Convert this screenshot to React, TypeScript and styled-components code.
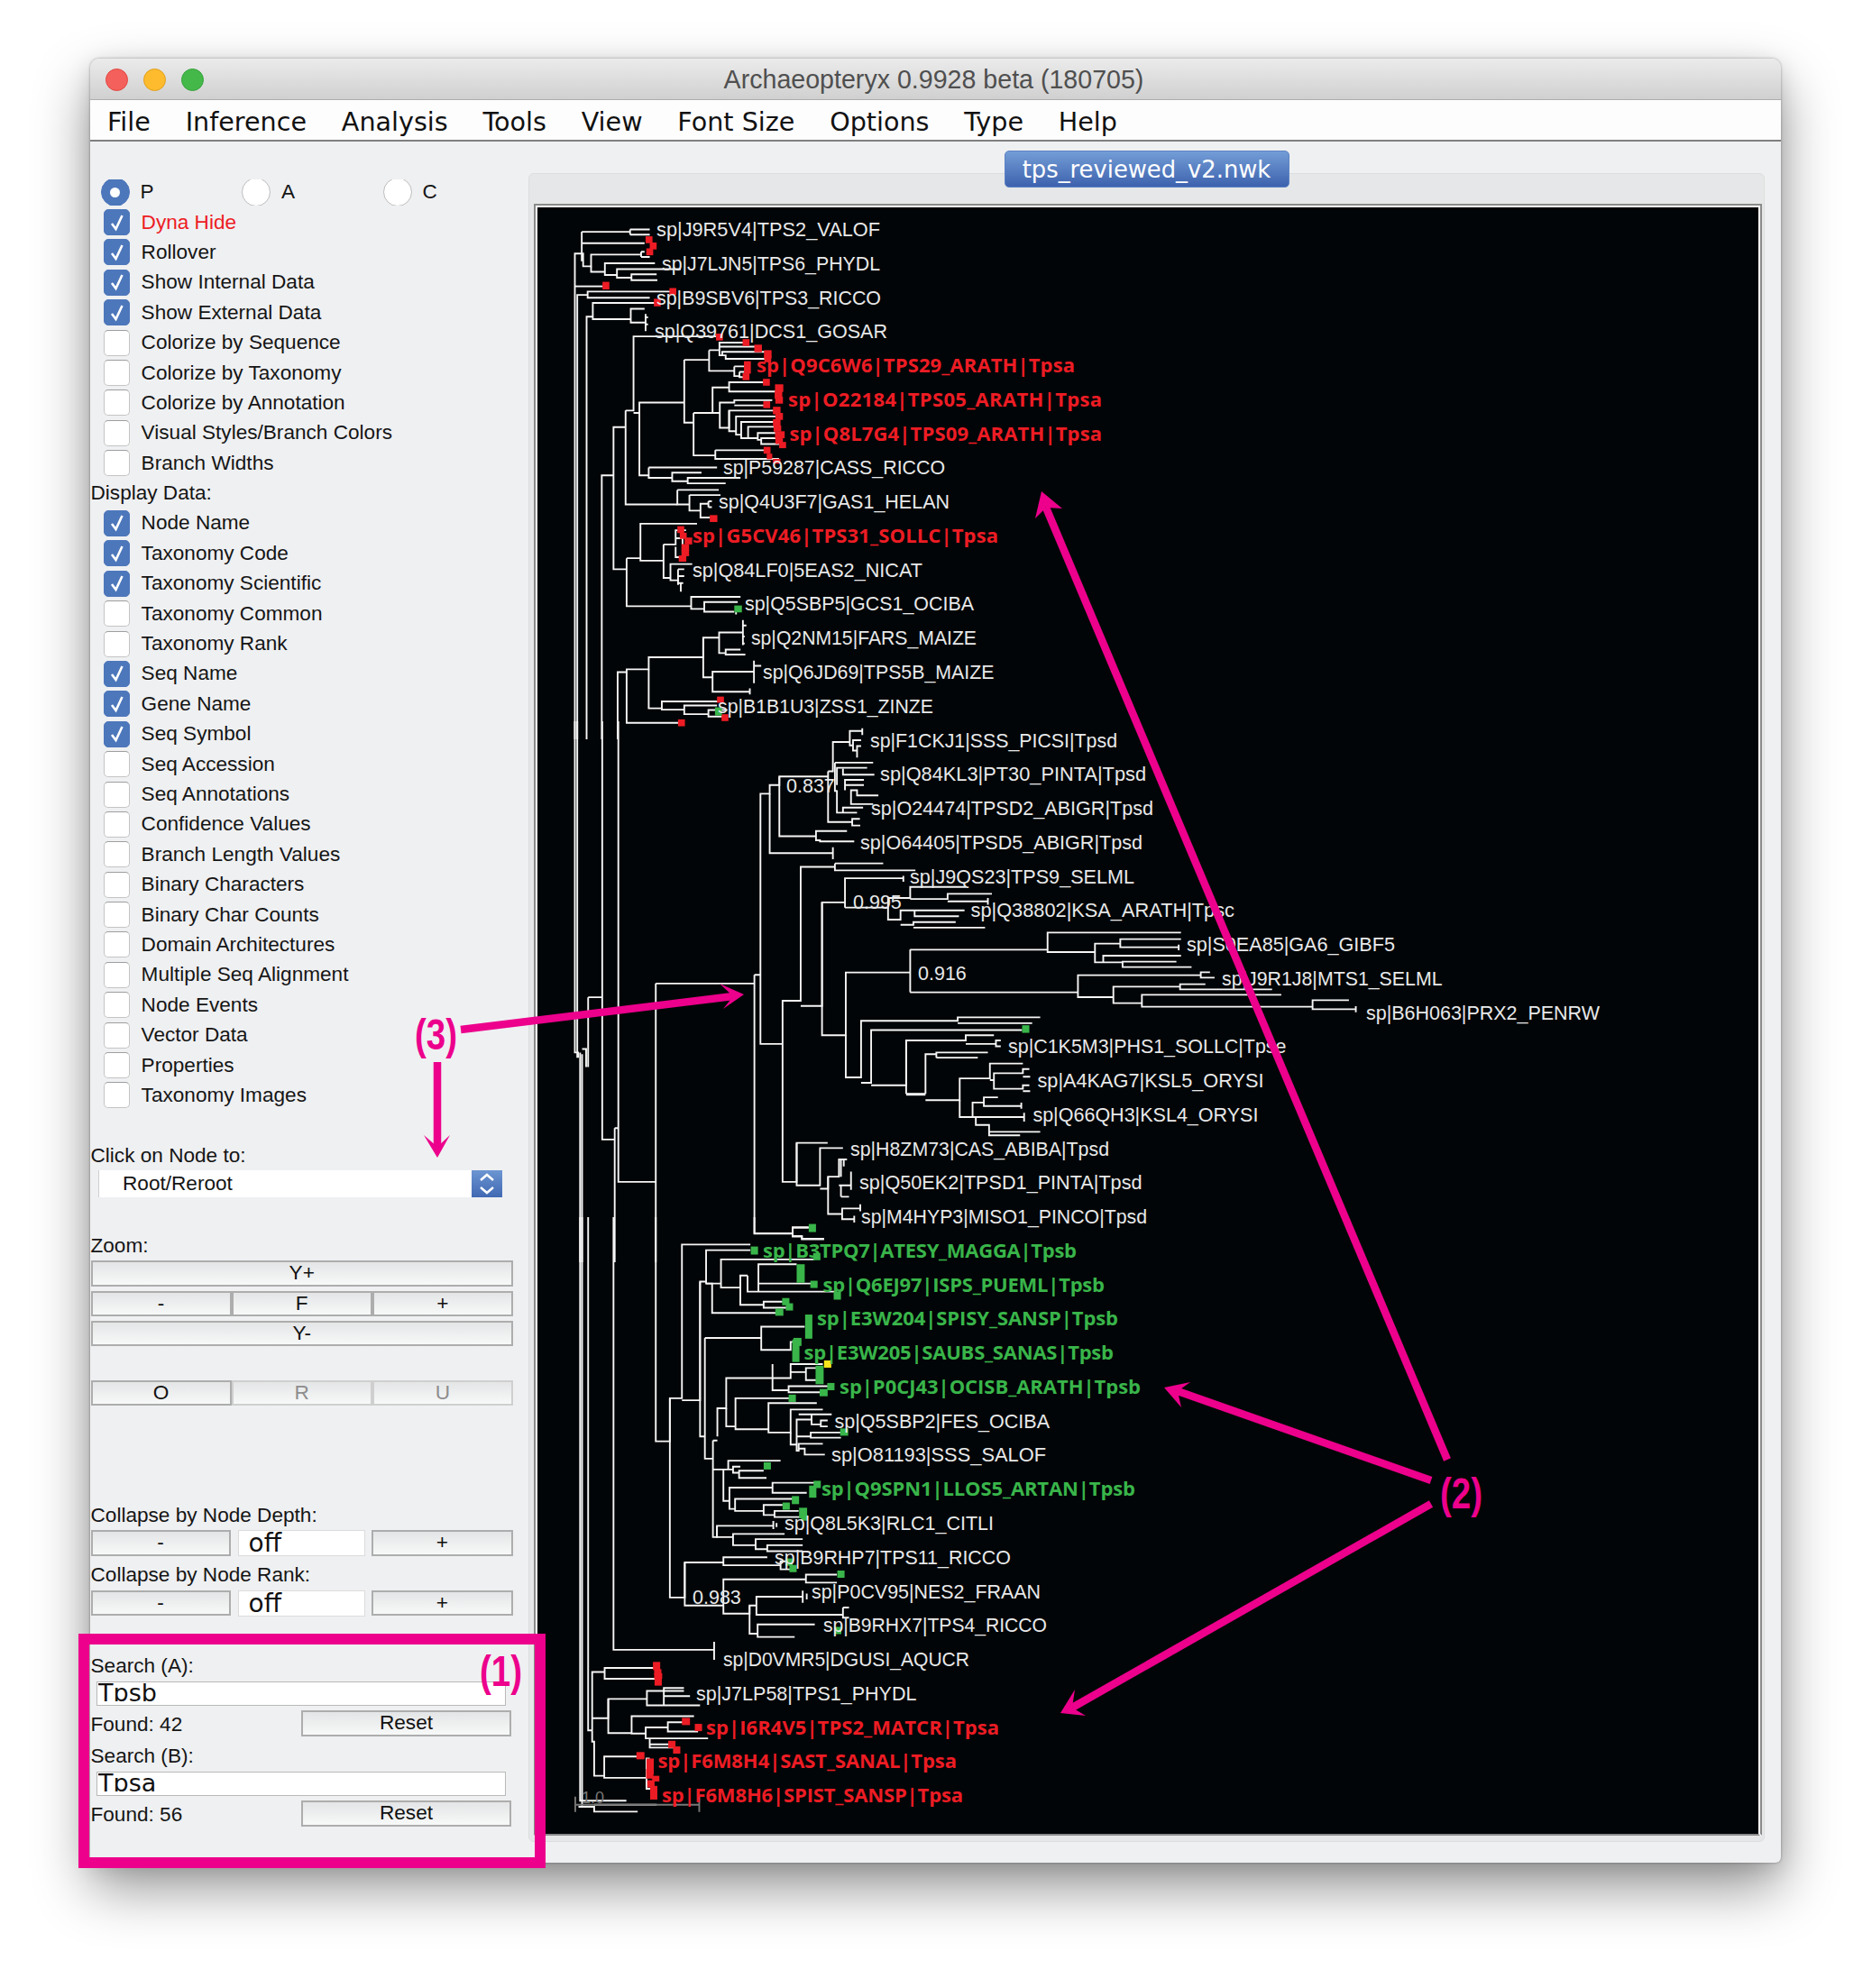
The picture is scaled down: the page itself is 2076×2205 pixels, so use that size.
import React from 'react';
import styled, { createGlobalStyle } from 'styled-components';

const Global = createGlobalStyle`
  html, body { margin: 0; padding: 0; background: #fff; }
  * { box-sizing: border-box; }
`;

const PINK = '#ec008c';
const SANS = '"Liberation Sans", Arial, sans-serif';
const WIDE = '"DejaVu Sans", Verdana, sans-serif';

const Page = styled.div`
  position: relative;
  width: 2076px;
  height: 2205px;
  padding: 65px 0 0 100px;
  overflow: hidden;
  background: #fff;
  font-family: ${SANS};
`;
const Win = styled.div`
  width: 1875px;
  height: 2001px;
  display: flex;
  flex-direction: column;
  background: #eff0f2;
  border-radius: 10px 10px 6px 6px;
  box-shadow: 0 28px 62px rgba(0, 0, 0, 0.42), 0 0 3px rgba(0, 0, 0, 0.35), 0 6px 24px rgba(0, 0, 0, 0.12);
`;
const TitleBar = styled.div`
  position: relative;
  height: 46px;
  flex: none;
  display: flex;
  align-items: center;
  justify-content: center;
  padding: 2px 4px 0 0;
  background: linear-gradient(#ebebeb, #d0d0d0);
  border-bottom: 1px solid #adadad;
  border-radius: 10px 10px 0 0;
  color: #4f4f4f;
  font-size: 28.6px;
`;
const Lights = styled.div`
  position: absolute;
  left: 17px;
  top: 11px;
  display: flex;
  gap: 17px;
`;
const Light = styled.div<{ $c: string; $b: string }>`
  width: 25px;
  height: 25px;
  border-radius: 50%;
  background: ${p => p.$c};
  border: 1px solid ${p => p.$b};
`;
const MenuBar = styled.div`
  height: 46px;
  flex: none;
  display: flex;
  align-items: center;
  gap: 38.8px;
  padding: 4px 0 0 19px;
  background: #fdfdfe;
  border-bottom: 2px solid #808080;
  font-family: ${WIDE};
  font-size: 28.6px;
  color: #111;
`;
const Content = styled.div`
  flex: 1;
  display: flex;
`;
const Side = styled.div`
  width: 486px;
  flex: none;
  padding: 39.5px 0 0 0.5px;
  font-size: 22.6px;
  color: #151515;
`;
const RadioRow = styled.div`
  display: flex;
  height: 33.4px;
  align-items: center;
`;
const RadioItem = styled.label`
  width: 156.5px;
  padding-left: 11px;
  display: flex;
  align-items: center;
  gap: 12px;
`;
const RadioClip = styled.span`
  width: 32px;
  height: 29px;
  overflow: hidden;
  display: flex;
  align-items: center;
  justify-content: center;
`;
const Disc = styled.span<{ $on?: boolean }>`
  width: 32px;
  height: 32px;
  flex: none;
  border-radius: 50%;
  display: flex;
  align-items: center;
  justify-content: center;
  background: ${p => (p.$on ? '#4d77bb' : '#fff')};
  border: 1px solid ${p => (p.$on ? '#4d77bb' : '#bdbdbd')};
  &::after {
    content: '';
    display: ${p => (p.$on ? 'block' : 'none')};
    width: 11px;
    height: 11px;
    border-radius: 50%;
    background: #fff;
  }
`;
const CheckRow = styled.div<{ $red?: boolean }>`
  display: flex;
  height: 33.4px;
  align-items: center;
  padding-left: 14.5px;
  gap: 12.6px;
  color: ${p => (p.$red ? '#ed1c24' : 'inherit')};
`;
const Box = styled.span<{ $on?: boolean }>`
  width: 29px;
  height: 29px;
  flex: none;
  border-radius: 5px;
  display: flex;
  align-items: center;
  justify-content: center;
  background: ${p => (p.$on ? '#4d77bb' : '#fff')};
  border: 1px solid ${p => (p.$on ? '#4d77bb' : '#c4c4c4')};
  border-top-color: ${p => (p.$on ? '#4d77bb' : '#9e9e9e')};
`;
const Label = styled.div<{ $mt?: number }>`
  height: 33.4px;
  line-height: 33.4px;
  margin-top: ${p => p.$mt ?? 0}px;
`;
const Combo = styled.div`
  width: 448px;
  height: 29.5px;
  margin-left: 8.5px;
  display: flex;
  background: #fff;
  border-left: 1px solid #d0d0d0;
`;
const ComboText = styled.div`
  flex: 1;
  padding-left: 26px;
  line-height: 29px;
`;
const ComboBtn = styled.div`
  width: 34px;
  display: flex;
  align-items: center;
  justify-content: center;
  background: linear-gradient(#6c95d2, #4069b3);
`;
const BtnRow = styled.div<{ $mt?: number; $w?: number }>`
  display: flex;
  width: ${p => p.$w ?? 468.5}px;
  margin-top: ${p => p.$mt ?? 0}px;
`;
const Btn = styled.div<{ $off?: boolean; $ml?: number; $w?: number; $h?: number }>`
  flex: ${p => (p.$w ? 'none' : '1')};
  width: ${p => (p.$w ? `${p.$w}px` : 'auto')};
  height: ${p => p.$h ?? 28.5}px;
  margin-left: ${p => p.$ml ?? 0}px;
  display: flex;
  align-items: center;
  justify-content: center;
  border: 2px solid ${p => (p.$off ? '#cfcfcf' : '#adadad')};
  background: linear-gradient(#e4e5e6, #f7f8f8);
  color: ${p => (p.$off ? '#8d8d8d' : '#111')};
  line-height: 1;
`;
const OffField = styled.div`
  width: 141px;
  height: 29px;
  margin-left: 8px;
  padding-left: 11px;
  background: #fff;
  border: 1px solid #dcdcdc;
  font-family: ${WIDE};
  font-size: 28px;
  line-height: 27px;
  color: #111;
`;
const SearchBox = styled.div`
  width: 454px;
  height: 27px;
  margin: 1px 0 0 6.5px;
  padding: 1px 0 0 1px;
  background: #fff;
  border: 1px solid #b9b9b9;
`;
const SearchText = styled.div`
  height: 20px;
  overflow: hidden;
  font-family: ${WIDE};
  font-size: 27px;
  line-height: 21px;
  color: #111;
`;
const FoundRow = styled.div`
  display: flex;
  align-items: center;
  height: 29px;
  margin-top: 5px;
  width: 466.5px;
  justify-content: space-between;
`;
const FoundText = styled.div`
  padding-top: 3px;
`;
const Main = styled.div`
  flex: 1;
  padding-top: 35px;
`;
const Pane = styled.div`
  position: relative;
  width: 1371px;
  height: 1851px;
  padding: 33px 0 0 5px;
  background: #e6e7e8;
  border: 1px solid #dcdddd;
  border-radius: 6px;
`;
const Tab = styled.div`
  position: absolute;
  left: 50%;
  top: -26px;
  transform: translateX(-50%);
  width: 316px;
  height: 41px;
  display: flex;
  align-items: center;
  justify-content: center;
  border-radius: 5px;
  background: linear-gradient(#739dd6, #3d62ae);
  border: 1px solid #5b83c4;
  color: #fff;
  font-family: ${WIDE};
  font-size: 25.8px;
`;
const Frame = styled.div`
  width: 1362px;
  height: 1810px;
  border: 2px solid #8a8a8a;
  border-bottom-color: #fff;
`;
const Canvas = styled.div`
  width: 1358px;
  height: 1808px;
  border: 2px solid #fff;
  border-bottom-color: #8a8a8a;
  background: #020507;
`;
const TreeSvg = styled.svg`
  display: block;
`;
const Branch = styled.path<{ $w?: number; $c?: string }>`
  fill: none;
  stroke: ${p => p.$c ?? '#f6f6f6'};
  stroke-width: ${p => p.$w ?? 1.9}px;
  vector-effect: non-scaling-stroke;
`;
const NodeText = styled.text<{ $kind: string }>`
  font-family: ${p => (p.$kind === 'w' ? SANS : '"Open Sans", "DejaVu Sans", sans-serif')};
  font-weight: ${p => (p.$kind === 'w' ? 400 : 700)};
  font-size: ${p => (p.$kind === 'w' ? 21.5 : 22)}px;
  fill: ${p => (p.$kind === 'r' ? '#ed1c24' : p.$kind === 'g' ? '#39b54a' : '#e8e9ea')};
`;
const ConfText = styled.text`
  font-family: ${SANS};
  font-size: 21.5px;
  fill: #e8e9ea;
`;
const ScaleText = styled.text`
  font-family: ${SANS};
  font-size: 18px;
  fill: #777;
`;
const Overlay = styled.svg`
  position: absolute;
  left: 0;
  top: 0;
  pointer-events: none;
`;
const ArrowShaft = styled.line`
  stroke: ${PINK};
  stroke-width: 8.5px;
`;
const ArrowHead = styled.polygon`
  fill: ${PINK};
`;
const Callout = styled.text`
  font-family: ${SANS};
  font-weight: 700;
  font-size: 49px;
  fill: ${PINK};
`;
const HighlightBox = styled.div`
  position: absolute;
  left: 87px;
  top: 1812px;
  width: 518px;
  height: 260px;
  border: 12.5px solid ${PINK};
  pointer-events: none;
`;

/* ------- data ------- */
type L = [string, number, number, 'w' | 'r' | 'g'];
const labels: L[] = [
  ['sp|J9R5V4|TPS2_VALOF', 728, 976, 'w'],
  ['sp|J7LJN5|TPS6_PHYDL', 734, 976, 'w'],
  ['sp|B9SBV6|TPS3_RICCO', 728, 977, 'w'],
  ['sp|Q39761|DCS1_GOSAR', 726, 984, 'w'],
  ['sp|Q9C6W6|TPS29_ARATH|Tpsa', 839, 1192, 'r'],
  ['sp|O22184|TPS05_ARATH|Tpsa', 874, 1222, 'r'],
  ['sp|Q8L7G4|TPS09_ARATH|Tpsa', 875.5, 1222, 'r'],
  ['sp|P59287|CASS_RICCO', 802, 1048, 'w'],
  ['sp|Q4U3F7|GAS1_HELAN', 797, 1053, 'w'],
  ['sp|G5CV46|TPS31_SOLLC|Tpsa', 768, 1107, 'r'],
  ['sp|Q84LF0|5EAS2_NICAT', 768, 1023, 'w'],
  ['sp|Q5SBP5|GCS1_OCIBA', 826, 1080, 'w'],
  ['sp|Q2NM15|FARS_MAIZE', 833, 1083, 'w'],
  ['sp|Q6JD69|TPS5B_MAIZE', 846, 1102.5, 'w'],
  ['sp|B1B1U3|ZSS1_ZINZE', 796, 1035, 'w'],
  ['sp|F1CKJ1|SSS_PICSI|Tpsd', 965, 1239, 'w'],
  ['sp|Q84KL3|PT30_PINTA|Tpsd', 976, 1271, 'w'],
  ['sp|O24474|TPSD2_ABIGR|Tpsd', 966, 1279, 'w'],
  ['sp|O64405|TPSD5_ABIGR|Tpsd', 954, 1267, 'w'],
  ['sp|J9QS23|TPS9_SELML', 1009, 1258, 'w'],
  ['sp|Q38802|KSA_ARATH|Tpsc', 1076.5, 1369, 'w'],
  ['sp|S0EA85|GA6_GIBF5', 1316, 1547, 'w'],
  ['sp|J9R1J8|MTS1_SELML', 1355, 1599.5, 'w'],
  ['sp|B6H063|PRX2_PENRW', 1515, 1774, 'w'],
  ['sp|C1K5M3|PHS1_SOLLC|Tpse', 1118, 1426.5, 'w'],
  ['sp|A4KAG7|KSL5_ORYSI', 1150.5, 1401.5, 'w'],
  ['sp|Q66QH3|KSL4_ORYSI', 1145.4, 1395.4, 'w'],
  ['sp|H8ZM73|CAS_ABIBA|Tpsd', 943, 1230, 'w'],
  ['sp|Q50EK2|TPSD1_PINTA|Tpsd', 953, 1266.5, 'w'],
  ['sp|M4HYP3|MISO1_PINCO|Tpsd', 955, 1272, 'w'],
  ['sp|B3TPQ7|ATESY_MAGGA|Tpsb', 846, 1194, 'g'],
  ['sp|Q6EJ97|ISPS_PUEML|Tpsb', 912.5, 1225, 'g'],
  ['sp|E3W204|SPISY_SANSP|Tpsb', 906, 1240, 'g'],
  ['sp|E3W205|SAUBS_SANAS|Tpsb', 891.5, 1235, 'g'],
  ['sp|P0CJ43|OCISB_ARATH|Tpsb', 931, 1265, 'g'],
  ['sp|Q5SBP2|FES_OCIBA', 925.5, 1164, 'w'],
  ['sp|O81193|SSS_SALOF', 922, 1160, 'w'],
  ['sp|Q9SPN1|LLOS5_ARTAN|Tpsb', 911, 1259, 'g'],
  ['sp|Q8L5K3|RLC1_CITLI', 870, 1102, 'w'],
  ['sp|B9RHP7|TPS11_RICCO', 859, 1121, 'w'],
  ['sp|P0CV95|NES2_FRAAN', 900, 1154, 'w'],
  ['sp|B9RHX7|TPS4_RICCO', 913, 1161, 'w'],
  ['sp|D0VMR5|DGUSI_AQUCR', 802, 1075, 'w'],
  ['sp|J7LP58|TPS1_PHYDL', 772, 1016.5, 'w'],
  ['sp|I6R4V5|TPS2_MATCR|Tpsa', 783, 1108, 'r'],
  ['sp|F6M8H4|SAST_SANAL|Tpsa', 729.5, 1061, 'r'],
  ['sp|F6M8H6|SPIST_SANSP|Tpsa', 734, 1068, 'r'],
];

type M = [number, number, number, number];
const Z2: string[] = [
  'M258 90H315M258 105H315M258 90V105M118 97H258M118 97V182',
  'M118 130H300M290 155V170M290 155H300M290 170H315',
  'M98 1568V160H122V197H145V163H290',
  'M145 197V213H185V188H330M185 213V222H220V205H405M220 205V230H262V220H335M262 220V237H337',
  'M98 255H180',
  'M105 1568V280H135V270H375M135 270V288H315',
  'M132 1568V343H150V303H330M150 303V350H260V320H300M260 350V360H303M303 335V385M303 345H310M303 365H310',
  'M176 1568V803H210V663H245M210 803V1075H248',
  'M245 615V887H395M245 615H268V400H510M268 622H285V592H415M285 592V803H312',
  'M415 468V650H442M415 468H487M487 440V500H560M487 440H517V418H590M517 430H620M517 418V455H525V445H650M525 455H535V465H650',
  'M560 487V515H575M560 487H600M575 503H590M575 503V518H590',
  'M442 622V745H505M442 622H497V548H545V533H650M545 533V560H680',
  'M497 622H518V592H560V585H670M560 600H650M518 592V665H545V615H680',
  'M545 615V675H565V632H690M565 632V685H580V648H680M580 648V695H600V662H690M600 662V695H628V680H690M628 680V700H638V695H690M638 695V712H690',
  'M505 730H650M505 730V755H690',
  'M312 780H510M312 780V810H380V795H465M380 795V820H425V810H578M425 820V826H535',
  'M395 845V887H430M395 845H515M430 860V905H462V885H485M430 860H520M462 885V925H490M485 878V895M485 878H495M485 895H495',
  'M248 1043H288V943H452M288 943V1050H355',
  'M355 1003V1100H375V1060H438M375 1060V1107H400M355 1003H390V962H420M390 985H410V1035H420M390 1010V1040H400',
  'M397 1075H415M397 1075V1120M397 1095H415M397 1115H412M405 1115V1140',
  'M248 1043V1182H435V1155H578M435 1155V1190H473V1170H570M473 1170V1198H560M565 1198V1206',
  'M222 1568V1373H248V1365H312V1330H470V1273H516V1258H585M516 1258V1318H535V1308H578M535 1308V1322H592',
  'M585 1222V1295M585 1238H595M585 1270H590M585 1290H590',
  'M470 1273V1388H497V1372H617M497 1372V1430H605M605 1420V1438M617 1340V1405M617 1355H638',
  'M248 1373V1520H400',
  'M312 1365V1478H350V1458H515M350 1458V1482H415V1470H510M415 1470V1495H485V1483H540M485 1483V1502H525',
];
const Z2R: M[] = [
  [313,120,20,20],[325,138,20,20],[315,155,20,20],[188,253,20,22],[382,270,20,20],[337,302,20,22],[517,402,20,20],[594,418,20,20],
  [629,435,22,22],[657,452,22,24],[657,465,20,20],[598,490,20,36],[594,517,20,20],[653,533,20,20],[690,550,24,22],[688,570,22,22],
  [690,585,22,20],[654,598,20,20],[683,615,22,22],[690,632,22,20],[683,650,22,20],[685,667,22,18],[692,685,28,20],[690,703,22,18],
  [700,715,20,18],[655,730,20,20],[662,748,16,16],[683,762,22,14],[500,928,22,20],[405,960,20,20],[412,978,20,18],[427,993,22,20],
  [418,1012,22,20],[418,1028,22,18],[410,1044,22,18],[520,1453,20,18],[533,1505,20,20],[407,1520,20,20],
];
const Z2G: M[] = [[571,1190,22,20],[514,1487,20,24]];

const Z3: string[] = [
  'M84 0V960H92V975M90 0V975M97 960V1568M102 965V1568M102 950H112V1002M117 800V1002M117 800H152',
  'M152 0V1212H183M183 1179V1568M183 1179H192M192 0V1335H285M285 760V1568M285 760H530',
  'M530 735V1485H625V1468H665M625 1485V1492H648V1500H703',
  'M530 735H545V210H568V185H592V160H713M545 735V935H600V810H645V422H730M600 935V1335H635V1222H712',
  'M568 210V382H725M725 365V400M592 160V333H683V318H760M683 333V345H693V348H778',
  'M713 145V292H773M713 145H725V60H767M767 60V28H798M798 20V40M767 60V70H775V55H795M775 70V85H785V72H795M785 85V105',
  'M730 120H825M730 120V202H735M735 200V265H750V250H800M750 265H785M735 185V135H750H810M750 138V155H828M755 200V170H802M755 185H802M770 215V200H785V215H838M770 215V240H825',
  'M773 292V283H792M773 292V302H793',
  'M730 412H850M730 412V432H930',
  'M645 825H698V525H755V455H900M900 448V465M755 540V525M755 540H862V512H917V480H1055M917 515H1010V500H1120M1010 522H1110M1110 512V532',
  'M862 540V575H893V548H928V565H1038M928 548H1052M893 590H925V582H1030M925 598H1103',
  'M698 525V910H757V728H917M917 662V785',
  'M757 910V1032H795V868H1035V858H1240M1035 875H1220M795 1048H820V895H1195',
  'M820 1055H907V925H1055V910H1125M1055 935H1130V925H1142M1130 925V942H1142',
  'M907 925V1080M955 1080V965H982V960H1110M982 975H1085M982 960V975M955 1098H1040V1035H1115V992H1197M1115 1040H1125V1020H1197V1008H1213M1197 1030H1215M1125 1040V1065H1197V1055H1213M1197 1072H1215',
  'M1040 1098V1147H1072V1105H1100V1090H1135M1100 1090V1115H1193M1193 1105V1123M1072 1147H1080H1200M1200 1135V1160M1080 1147V1170H1113V1190H1240M1113 1190V1200H1190',
  'M635 1222V1345H693V1237H750M693 1355H713V1320H740V1270H760M745 1270V1320M752 1270V1290M740 1345H770M770 1305V1358M745 1378V1345M745 1378H765',
  'M713 1320V1428H748V1412H793M793 1400V1420M748 1412V1443H778M778 1433V1453',
];
const Z3G: M[] = [[1204,892,18,22]];

const Z7: string[] = [
  'M18 220H317V163H607M317 163V228H420V200H475V185H607M475 185V212H602M602 203V222M420 200V262H438V240H607M438 240V262H480V260H597M480 260V278H630',
  'M18 362H383V305H650V295H670M650 295V313H680M383 305V378H460V343H605V335H660M605 335V352H805M460 343V398H522V370H825M522 370V410H893V388H972M893 388V418H987M987 408V428',
];

const Z4: string[] = [
  'M97 0V1450H212M102 0V1465M93 1465H132V1477H240M132 1460H287',
  'M117 0V1275H127M180 0V1075H430M430 1055V1100',
  'M285 0V557H320V450H350V68H520M530 0V40H625V25H665M625 40V48H648V55H703',
  'M350 455H395V160H410V82H520M410 82V165H447V105H680M447 105V175H495V145H513M513 145V185H540V117H635M540 117V165H670M540 185H735',
  'M495 175V218H553V210H600M553 210V225H615M410 165H425V238H585',
  'M395 160V545H407V600H427M407 300V545M407 300H547V272H655M547 272V330H620V310H640',
  'M438 545V475H460V400H575V365M575 400H620V365H700M620 365V385H658V375H690M658 375V405H690M575 400V430H615V420H720M615 420V435H700',
  'M460 475V520H483V450H620M483 450V527H565V462H685M565 462V535H620V478H640M640 478H700M640 490H722',
  'M620 535V565H635V503H672M672 490V515H695V505H712M695 515V520H712M635 545H670V535H745M670 535V548H745M635 545V580H640V563H700M640 563V575H655V590H705',
  'M427 555H438M427 555V795H437V767H577M577 755V775M585 760V770',
  'M453 627H465V605H595M465 605V627H477V620H495M477 620V635H492V630H553M492 630V648H560',
  'M427 627H453V705H468V672H575V660H680M575 660V685H660M468 672V725H482V700H625M482 700V730H553V715H600M553 715V740H580V730H640M580 730V745H650',
  'M437 767V795H477V787H605M477 787V815H533V800H650M533 800V825H562V815H650M562 815V830H650',
  'M320 450V945H357V858H453V845H562M453 845V865H595V855H620M595 855V875H625',
  'M357 858V965H453V900H658V888H735M658 888V908H735M453 900V985H518V965H535V943H650M650 928V958M660 935V950M535 943V988H750M750 970V995H765M750 970H765',
  'M518 965V1035H538V1012H680M538 1012V1043H630',
  'M127 1275V1130H158V1120H280M158 1120V1147H290',
  'M127 1245H167V1197H263V1177H355M263 1177V1213H305V1170H355M305 1190H370M305 1213H395',
  'M167 1197V1282H225V1240H380M225 1240V1283H260V1268H315V1255H360M315 1255V1278H390M260 1268V1295H415M270 1295V1318H335M270 1310H330',
  'M127 1275V1303H132V1388H157V1340H240M157 1340V1393H262V1345H270M262 1345V1420H280',
];
const Z4G: M[] = [
  [674,27,18,20],[530,83,18,20],[685,98,18,18],[645,140,20,46],[678,167,18,18],[736,195,18,20],[608,210,18,18],[617,223,18,18],[592,236,20,18],
  [665,272,18,60],[637,310,20,20],[633,332,18,56],[692,392,20,46],[720,421,18,18],[702,436,20,18],[624,450,18,18],[753,534,20,18],[562,618,18,18],
  [686,664,18,18],[675,682,18,30],[632,703,18,20],[609,718,18,18],[651,735,20,26],[654,747,16,14],[616,857,18,18],[626,873,18,18],[745,887,18,18],[737,1027,18,18],
];
const Z4R: M[] = [
  [287,1115,18,20],[290,1130,18,14],[291,1140,20,14],[291,1155,18,18],[360,1253,20,18],[391,1268,18,18],[325,1310,18,18],[337,1324,18,18],
  [247,1338,20,18],[271,1365,18,40],[270,1383,18,24],[285,1395,18,14],[273,1408,18,18],[280,1430,18,34],
];
const Z4Y: M[] = [[712,365,18,18]];

const Rects = ({ items, color }: { items: M[]; color: string }) => (
  <>
    {items.map(([cx, cy, w, h], i) => (
      <rect key={i} x={cx - w / 2} y={cy - h / 2} width={w} height={h} fill={color} />
    ))}
  </>
);
const Traces = ({ items }: { items: string[] }) => (
  <>
    {items.map((d, i) => (
      <Branch key={i} d={d} />
    ))}
  </>
);

const RED = '#ed1c24';
const GREEN = '#39b54a';

const Tree = () => (
  <TreeSvg width={1354} height={1804} viewBox="596 230 1354 1804">
    <g transform={`translate(600 220) scale(${1 / 2.613} ${1 / 2.613})`}>
      <Traces items={Z2} />
      <Rects items={Z2R} color={RED} />
      <Rects items={Z2G} color={GREEN} />
    </g>
    <g transform={`translate(600 800) scale(${1 / 2.24} ${1 / 2.613})`}>
      <Traces items={Z3} />
      <Branch d="M907 1081H955" $w={3} />
      <Rects items={Z3G} color={GREEN} />
    </g>
    <g transform={`translate(1000 980) scale(${1 / 1.96} ${1 / 3})`}>
      <Traces items={Z7} />
    </g>
    <g transform={`translate(600 1350) scale(${1 / 2.24} ${1 / 2.24})`}>
      <Traces items={Z4} />
      <Branch d="M85 1460H393M85 1440V1478M393 1440V1478" $c="#777" />
      <Rects items={Z4G} color={GREEN} />
      <Rects items={Z4R} color={RED} />
      <Rects items={Z4Y} color="#f7e61c" />
    </g>
    {labels.map(([t, x0, x1, k], i) => (
      <NodeText
        key={t}
        $kind={k}
        x={x0}
        y={254.4 + 37.76 * i + 7.7}
        textLength={x1 - x0}
        lengthAdjust={k === 'w' ? 'spacingAndGlyphs' : 'spacing'}
      >
        {t}
      </NodeText>
    ))}
    <ConfText x={872} y={879}>0.837</ConfText>
    <ConfText x={946} y={1008}>0.995</ConfText>
    <ConfText x={1018} y={1087}>0.916</ConfText>
    <ConfText x={768} y={1779}>0.983</ConfText>
    <ScaleText x={645} y={2000}>1.0</ScaleText>
  </TreeSvg>
);

const Tick = () => (
  <svg width="18" height="20" viewBox="0 0 18 20">
    <path d="M3 11l4.5 6L14.5 2" fill="none" stroke="#fff" strokeWidth="2.6" />
  </svg>
);

const topChecks: [string, boolean, boolean?][] = [
  ['Dyna Hide', true, true],
  ['Rollover', true],
  ['Show Internal Data', true],
  ['Show External Data', true],
  ['Colorize by Sequence', false],
  ['Colorize by Taxonomy', false],
  ['Colorize by Annotation', false],
  ['Visual Styles/Branch Colors', false],
  ['Branch Widths', false],
];
const dataChecks: [string, boolean][] = [
  ['Node Name', true],
  ['Taxonomy Code', true],
  ['Taxonomy Scientific', true],
  ['Taxonomy Common', false],
  ['Taxonomy Rank', false],
  ['Seq Name', true],
  ['Gene Name', true],
  ['Seq Symbol', true],
  ['Seq Accession', false],
  ['Seq Annotations', false],
  ['Confidence Values', false],
  ['Branch Length Values', false],
  ['Binary Characters', false],
  ['Binary Char Counts', false],
  ['Domain Architectures', false],
  ['Multiple Seq Alignment', false],
  ['Node Events', false],
  ['Vector Data', false],
  ['Properties', false],
  ['Taxonomy Images', false],
];

const Check = ({ text, on, red }: { text: string; on: boolean; red?: boolean }) => (
  <CheckRow $red={red}>
    <Box $on={on}>{on && <Tick />}</Box>
    {text}
  </CheckRow>
);

const Arrow = ({ from, notch, tip, a, b }: { from: number[]; notch: number[]; tip: number[]; a: number[]; b: number[] }) => (
  <>
    <ArrowShaft x1={from[0]} y1={from[1]} x2={notch[0]} y2={notch[1]} />
    <ArrowHead points={[tip, a, notch, b].map(p => p.join(',')).join(' ')} />
  </>
);

export default function App() {
  return (
    <Page>
      <Global />
      <Win>
        <TitleBar>
          <Lights>
            <Light $c="#f4605c" $b="#e2463f" />
            <Light $c="#fdbb2d" $b="#e0a020" />
            <Light $c="#45b84a" $b="#35a33b" />
          </Lights>
          Archaeopteryx 0.9928 beta (180705)
        </TitleBar>
        <MenuBar>
          {['File', 'Inference', 'Analysis', 'Tools', 'View', 'Font Size', 'Options', 'Type', 'Help'].map(m => (
            <span key={m}>{m}</span>
          ))}
        </MenuBar>
        <Content>
          <Side>
            <RadioRow>
              <RadioItem><RadioClip><Disc $on /></RadioClip>P</RadioItem>
              <RadioItem><RadioClip><Disc /></RadioClip>A</RadioItem>
              <RadioItem><RadioClip><Disc /></RadioClip>C</RadioItem>
            </RadioRow>
            {topChecks.map(([t, on, red]) => <Check key={t} text={t} on={on} red={red} />)}
            <Label>Display Data:</Label>
            {dataChecks.map(([t, on]) => <Check key={t} text={t} on={on} />)}
            <Label $mt={33}>Click on Node to:</Label>
            <Combo>
              <ComboText>Root/Reroot</ComboText>
              <ComboBtn>
                <svg width="24" height="28" viewBox="0 0 24 28">
                  <path d="M5 10l7-6 7 6M5 18l7 6 7-6" fill="none" stroke="#fff" strokeWidth="2.5" />
                </svg>
              </ComboBtn>
            </Combo>
            <Label $mt={37.5}>Zoom:</Label>
            <BtnRow><Btn>Y+</Btn></BtnRow>
            <BtnRow $mt={5}><Btn>-</Btn><Btn>F</Btn><Btn>+</Btn></BtnRow>
            <BtnRow $mt={4.5}><Btn>Y-</Btn></BtnRow>
            <BtnRow $mt={37.5}><Btn>O</Btn><Btn $off>R</Btn><Btn $off>U</Btn></BtnRow>
            <Label $mt={104.5}>Collapse by Node Depth:</Label>
            <BtnRow>
              <Btn $w={155}>-</Btn>
              <OffField>off</OffField>
              <Btn $ml={7}>+</Btn>
            </BtnRow>
            <Label $mt={4}>Collapse by Node Rank:</Label>
            <BtnRow>
              <Btn $w={155}>-</Btn>
              <OffField>off</OffField>
              <Btn $ml={7}>+</Btn>
            </BtnRow>
            <Label $mt={38}>Search (A):</Label>
            <SearchBox><SearchText>Tpsb</SearchText></SearchBox>
            <FoundRow>
              <FoundText>Found: 42</FoundText>
              <Btn $w={233} $h={29}>Reset</Btn>
            </FoundRow>
            <Label $mt={4.5}>Search (B):</Label>
            <SearchBox><SearchText>Tpsa</SearchText></SearchBox>
            <FoundRow>
              <FoundText>Found: 56</FoundText>
              <Btn $w={233} $h={29}>Reset</Btn>
            </FoundRow>
          </Side>
          <Main>
            <Pane>
              <Tab>tps_reviewed_v2.nwk</Tab>
              <Frame>
                <Canvas>
                  <Tree />
                </Canvas>
              </Frame>
            </Pane>
          </Main>
        </Content>
      </Win>
      <HighlightBox />
      <Overlay width={2076} height={2205} viewBox="0 0 2076 2205">
        <Arrow from={[511, 1142]} notch={[813, 1105]} tip={[825, 1103]} a={[798, 1091]} b={[802, 1119]} />
        <Arrow from={[485, 1178]} notch={[485, 1272]} tip={[485, 1284]} a={[470, 1259]} b={[499, 1259]} />
        <Arrow from={[1605, 1619]} notch={[1160, 563]} tip={[1155, 545]} a={[1148, 575]} b={[1178, 564]} />
        <Arrow from={[1587, 1642]} notch={[1306, 1543]} tip={[1291, 1539]} a={[1320, 1533]} b={[1310, 1561]} />
        <Arrow from={[1587, 1668]} notch={[1189, 1894]} tip={[1176, 1900]} a={[1192, 1874]} b={[1204, 1903]} />
        <Callout x={532} y={1870} textLength={47} lengthAdjust="spacingAndGlyphs">(1)</Callout>
        <Callout x={1597} y={1673} textLength={47} lengthAdjust="spacingAndGlyphs">(2)</Callout>
        <Callout x={460} y={1164} textLength={47} lengthAdjust="spacingAndGlyphs">(3)</Callout>
      </Overlay>
    </Page>
  );
}
